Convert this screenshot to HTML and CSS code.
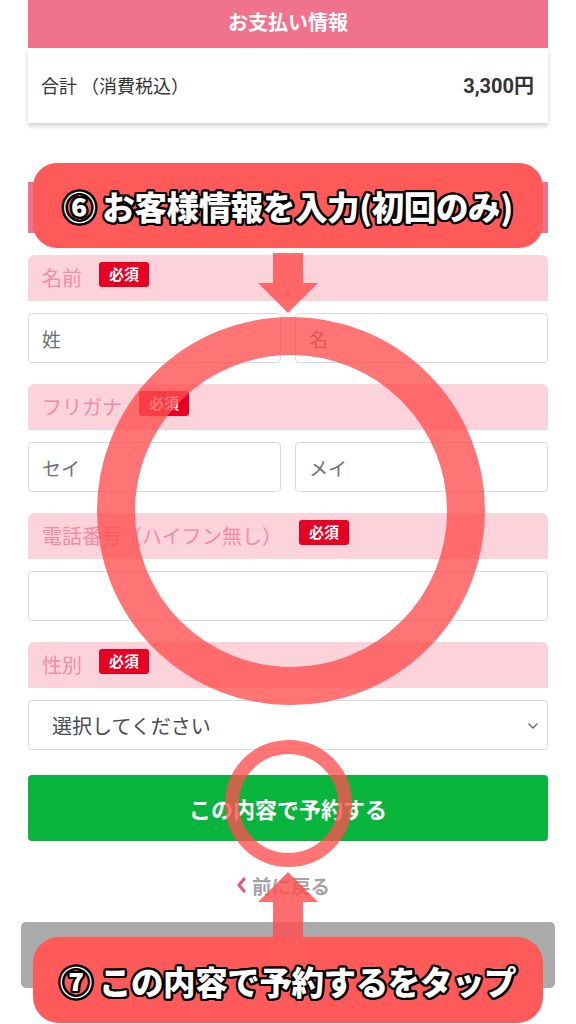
FILE: index.html
```html
<!DOCTYPE html>
<html lang="ja">
<head>
<meta charset="utf-8">
<title>お客様情報</title>
<link rel="stylesheet" href="styles.css">
</head>
<body>
<div class="page">
  <div class="pay-head">お支払い情報</div>
  <div class="pay-card">
    <span class="pay-label">合計 （消費税込）</span>
    <span class="pay-total">3,300円</span>
  </div>

  <div class="section-bar"></div>

  <div class="field">
    <div class="label-row"><span class="label">名前</span><span class="req">必須</span></div>
    <div class="pair">
      <div class="input"><span class="ph">姓</span></div>
      <div class="input"><span class="ph">名</span></div>
    </div>
  </div>

  <div class="field">
    <div class="label-row"><span class="label">フリガナ</span><span class="req">必須</span></div>
    <div class="pair">
      <div class="input"><span class="ph">セイ</span></div>
      <div class="input"><span class="ph">メイ</span></div>
    </div>
  </div>

  <div class="field">
    <div class="label-row"><span class="label">電話番号（ハイフン無し）</span><span class="req">必須</span></div>
    <div class="input"></div>
  </div>

  <div class="field">
    <div class="label-row"><span class="label">性別</span><span class="req">必須</span></div>
    <div class="input select"><span class="sel-text">選択してください</span>
      <svg class="chev" width="12" height="8" viewBox="0 0 12 8"><path d="M1.5 1.5 L6 6 L10.5 1.5" fill="none" stroke="#666" stroke-width="1.4"/></svg>
    </div>
  </div>

  <div class="submit">この内容で予約する</div>

  <div class="back">
    <svg class="back-chev" width="10" height="16" viewBox="0 0 10 16"><path d="M8 2 L3 8 L8 14" fill="none" stroke="#e8587c" stroke-width="3.2" stroke-linecap="round" stroke-linejoin="round"/></svg>
    <span>前に戻る</span>
  </div>

  <div class="bottom-bar"></div>
</div>

<svg class="overlay" width="576" height="1024" viewBox="0 0 576 1024">
  <circle cx="291" cy="511" r="175" fill="none" stroke="rgba(255,78,78,0.78)" stroke-width="38"/>
  <circle cx="288.5" cy="803.5" r="56.5" fill="none" stroke="rgba(255,78,78,0.78)" stroke-width="14"/>
  <polygon points="273,253 303,253 303,283 318,283 288,313 258,283 273,283" fill="rgba(255,78,78,0.82)"/>
  <polygon points="288,872 318,902 303,902 303,937 273,937 273,902 258,902" fill="rgba(255,78,78,0.82)"/>
</svg>

<div class="callout callout-6">⑥ お客様情報を入力(初回のみ)</div>
<div class="callout callout-7">⑦ この内容で予約するをタップ</div>
</body>
</html>
```

FILE: styles.css
```css
* { box-sizing: border-box; }

html, body {
  margin: 0;
  padding: 0;
  background: #ffffff;
}

body {
  position: relative;
  width: 576px;
  height: 1024px;
  overflow: hidden;
  font-family: "Noto Sans CJK JP", "Noto Sans", sans-serif;
}

.page {
  padding: 0 28px;
  display: flex;
  flex-direction: column;
}

.pay-head {
  height: 48px;
  background: #f1728c;
  color: #ffffff;
  font-size: 20px;
  font-weight: 700;
  display: flex;
  align-items: center;
  justify-content: center;
  padding-bottom: 6px;
}

.pay-card {
  height: 75px;
  background: #ffffff;
  box-shadow: 0 3px 5px rgba(0, 0, 0, 0.18);
  display: flex;
  align-items: center;
  justify-content: space-between;
  padding: 0 14px 2px 13px;
  color: #333333;
}

.pay-label {
  font-size: 18px;
}

.pay-total {
  font-size: 20px;
  font-weight: 700;
  font-family: "Roboto", "Noto Sans CJK JP", sans-serif;
}

.section-bar {
  margin-top: 59px;
  height: 51px;
  background: #f1728c;
}

.field {
  margin-top: 22px;
  display: flex;
  flex-direction: column;
  gap: 12px;
}

.field + .field {
  margin-top: 21px;
}

.label-row {
  height: 46px;
  background: #fcd3db;
  border-radius: 6px 6px 0 0;
  display: flex;
  align-items: center;
  padding-left: 14px;
}

.label {
  color: #f28ca2;
  font-size: 20px;
  line-height: 1;
}

.req {
  margin-left: 17px;
  background: #e60023;
  color: #ffffff;
  font-size: 15px;
  font-weight: 700;
  border-radius: 3px;
  padding: 2px 10px 3px;
  line-height: 20px;
  margin-bottom: 7px;
}

.pair {
  display: flex;
  gap: 14px;
}

.pair .input {
  flex: 1;
}

.input {
  height: 50px;
  border: 1px solid #d5dbe2;
  border-radius: 4px;
  background: #ffffff;
  display: flex;
  align-items: center;
  padding-left: 13px;
}

.ph {
  color: #6e7278;
  font-size: 19px;
}

.select {
  justify-content: space-between;
  padding: 0 8px 0 23px;
}

.sel-text {
  color: #444b52;
  font-size: 20px;
}

.chev {
  margin-top: 2px;
}

.submit {
  margin-top: 25px;
  height: 66px;
  background: #08b43c;
  border-radius: 4px;
  color: #ffffff;
  font-size: 22px;
  font-weight: 700;
  display: flex;
  align-items: center;
  justify-content: center;
}

.back {
  margin-top: 26px;
  height: 36px;
  display: flex;
  align-items: center;
  justify-content: center;
  gap: 6px;
  color: #a4a4a4;
  font-size: 19.5px;
  font-weight: 700;
  padding-right: 10px;
}

.bottom-bar {
  margin: 19px -7px 0;
  height: 66px;
  background: #aaaaaa;
  border-radius: 5px;
}

.overlay {
  position: absolute;
  left: 0;
  top: 0;
  pointer-events: none;
}

.callout {
  position: absolute;
  left: 33px;
  width: 510px;
  background: #ff5a5a;
  color: #ffffff;
  font-size: 32.5px;
  font-weight: 900;
  display: flex;
  align-items: center;
  justify-content: center;
  letter-spacing: -0.4px;
  text-shadow:
    2.3px 0 0 #000, -2.3px 0 0 #000, 0 2.3px 0 #000, 0 -2.3px 0 #000,
    1.6px 1.6px 0 #000, -1.6px 1.6px 0 #000, 1.6px -1.6px 0 #000, -1.6px -1.6px 0 #000,
    2.1px 0.9px 0 #000, -2.1px 0.9px 0 #000, 2.1px -0.9px 0 #000, -2.1px -0.9px 0 #000,
    0.9px 2.1px 0 #000, -0.9px 2.1px 0 #000, 0.9px -2.1px 0 #000, -0.9px -2.1px 0 #000;
}

.callout-6 {
  top: 163px;
  height: 85px;
  border-radius: 24px;
}

.callout-7 {
  top: 937px;
  height: 86px;
  border-radius: 26px;
}
```
